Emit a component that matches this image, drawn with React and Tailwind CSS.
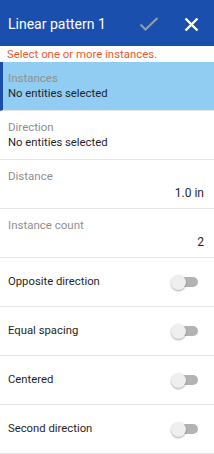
import React from "react";

const font = { fontFamily: "Roboto, 'Noto Sans', sans-serif" };

const Toggle = () => (
  <div className="relative w-[27px] h-[15px] flex items-center">
    <div className="absolute left-[3px] right-0 h-[10px] rounded-full bg-[#b3b3b3]" />
    <div className="absolute left-0 w-[15px] h-[15px] rounded-full bg-[#efefef] shadow-[0_1px_2px_rgba(0,0,0,0.35)]" />
  </div>
);

const SelectRow = ({ label, value, active }) => (
  <div
    className={
      active
        ? "h-[49px] flex flex-col pt-[8px] pl-[5px] border-b border-[#e5e5e5] bg-[#91cdf2] border-l-[3px] border-l-[#1a4fa8]"
        : "h-[49px] flex flex-col pt-[8px] pl-[8px] border-b border-[#e5e5e5] bg-white"
    }
  >
    <div className="text-[11.5px] leading-[16px] text-[#8f8f8f]">{label}</div>
    <div className="text-[11.3px] leading-[16px] text-[#1f1f1f]">{value}</div>
  </div>
);

const ValueRow = ({ label, value }) => (
  <div className="h-[49px] flex flex-col pt-[8px] px-[8px] border-b border-[#e5e5e5]">
    <div className="text-[11.5px] leading-[16px] text-[#8f8f8f]">{label}</div>
    <div className="text-[12px] leading-[18px] text-[#1f1f1f] text-right pr-[2px]">{value}</div>
  </div>
);

const ToggleRow = ({ label }) => (
  <div className="h-[49px] flex items-center justify-between pl-[8px] pr-[16px] border-b border-[#e5e5e5]">
    <span className="text-[11.3px] text-[#1f1f1f]">{label}</span>
    <Toggle />
  </div>
);

export default function App() {
  return (
    <div className="w-[214px] h-[454px] bg-white overflow-hidden" style={font}>
      <div className="h-[46px] bg-[#1a4fae] flex items-center pl-[8px] pr-[15px] pt-[2px]">
        <span className="text-white text-[14px] flex-1">Linear pattern 1</span>
        <svg width="20" height="15" viewBox="0 0 20 15" className="mr-[25px]">
          <path d="M1.5 7.5 L6.5 12.5 L18.5 1" stroke="#9a9a9a" strokeWidth="2.2" fill="none" />
        </svg>
        <svg width="15" height="15" viewBox="0 0 15 15">
          <path d="M1.5 1.5 L13.5 13.5 M13.5 1.5 L1.5 13.5" stroke="white" strokeWidth="2.4" fill="none" />
        </svg>
      </div>
      <div className="h-[16px] pl-[7px] text-[11.4px] leading-[16px] text-[#ea5a33]">
        Select one or more instances.
      </div>
      <SelectRow label="Instances" value="No entities selected" active />
      <SelectRow label="Direction" value="No entities selected" />
      <ValueRow label="Distance" value="1.0 in" />
      <ValueRow label="Instance count" value="2" />
      <ToggleRow label="Opposite direction" />
      <ToggleRow label="Equal spacing" />
      <ToggleRow label="Centered" />
      <ToggleRow label="Second direction" />
    </div>
  );
}
